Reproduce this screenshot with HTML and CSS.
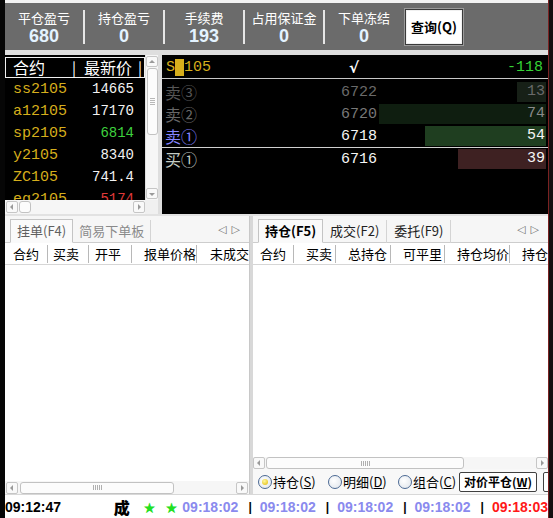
FILE: index.html
```html
<!DOCTYPE html>
<html lang="zh-CN">
<head>
<meta charset="utf-8">
<title>交易终端</title>
<link rel="stylesheet" href="styles.css">
</head>
<body>
<div class="app">
  <div class="edge-l"></div>
  <div class="main">
    <div class="topstrip"></div>
    <div class="stats">
      <div class="stat"><span class="lbl">平仓盈亏</span><span class="val">680</span></div>
      <div class="sep"></div>
      <div class="stat"><span class="lbl">持仓盈亏</span><span class="val">0</span></div>
      <div class="sep"></div>
      <div class="stat"><span class="lbl">手续费</span><span class="val">193</span></div>
      <div class="sep"></div>
      <div class="stat"><span class="lbl">占用保证金</span><span class="val">0</span></div>
      <div class="sep"></div>
      <div class="stat"><span class="lbl">下单冻结</span><span class="val">0</span></div>
      <button class="query">查询(Q)</button>
    </div>
    <div class="gap5"></div>

    <div class="upper">
      <div class="quotes">
        <div class="qlist">
          <div class="qhead"><span class="qh-name">合约</span><span class="qh-bar">|</span><span class="qh-price">最新价</span><span class="qh-bar">|</span></div>
          <div class="qrow"><span class="qn">ss2105</span><span class="qp">14665</span></div>
          <div class="qrow"><span class="qn">a12105</span><span class="qp">17170</span></div>
          <div class="qrow"><span class="qn">sp2105</span><span class="qp up">6814</span></div>
          <div class="qrow"><span class="qn">y2105</span><span class="qp">8340</span></div>
          <div class="qrow"><span class="qn">ZC105</span><span class="qp">741.4</span></div>
          <div class="qrow"><span class="qn">eg2105</span><span class="qp down">5174</span></div>
        </div>
        <div class="sb-v">
          <div class="arr arr-up"></div>
          <div class="thumb-v"><i class="grip-h"></i></div>
          <div class="sb-fill"></div>
          <div class="arr arr-down"></div>
        </div>
        <div class="sb-h">
          <div class="arr arr-left"></div>
          <div class="thumb-h thumb-q"></div>
          <div class="sb-fill"></div>
          <div class="arr arr-right"></div>
        </div>
        <div class="corner"></div>
      </div>

      <div class="book">
        <div class="bhead">
          <span class="bsym">S<span class="blk">M</span>105</span>
          <span class="bcheck">√</span>
          <span class="bchg">-118</span>
        </div>
        <div class="brow">
          <span class="blbl a3">卖③</span><span class="bpx a3p">6722</span>
          <div class="bvol"><div class="bar bar-a3" style="width:29px"><span class="a3p">13</span></div></div>
        </div>
        <div class="brow">
          <span class="blbl a2">卖②</span><span class="bpx a2p">6720</span>
          <div class="bvol"><div class="bar bar-a2" style="width:167px"><span class="a2v">74</span></div></div>
        </div>
        <div class="brow">
          <span class="blbl a1">卖①</span><span class="bpx wp">6718</span>
          <div class="bvol"><div class="bar bar-a1" style="width:121px"><span class="wp">54</span></div></div>
        </div>
        <div class="bline"></div>
        <div class="brow">
          <span class="blbl b1">买①</span><span class="bpx wp">6716</span>
          <div class="bvol"><div class="bar bar-b1" style="width:88px"><span class="wp">39</span></div></div>
        </div>
      </div>
    </div>

    <div class="lower">
      <div class="panel panel-l">
        <div class="tabs">
          <div class="tab sel dim">挂单(F4)</div>
          <div class="tab dim2">简易下单板</div>
          <div class="tabarrows"><span>◁</span><span>▷</span></div>
        </div>
        <div class="cols">
          <span class="col" style="width:43px;padding-left:8px">合约</span>
          <span class="col" style="width:41px;padding-left:5px">买卖</span>
          <span class="col" style="width:43px;padding-left:6px">开平</span>
          <span class="col" style="width:65px;padding-left:12px">报单价格</span>
          <span class="col last" style="width:60px;padding-left:13px">未成交数</span>
        </div>
        <div class="body"></div>
        <div class="sb-h sb-hl">
          <div class="arr arr-left"></div>
          <div class="thumb-h thumb-l"><i class="grip-v"></i></div>
          <div class="sb-fill"></div>
          <div class="arr arr-right"></div>
        </div>
      </div>
      <div class="divider"></div>
      <div class="panel panel-r">
        <div class="tabs">
          <div class="tab sel bold">持仓(F5)</div>
          <div class="tab plain">成交(F2)</div>
          <div class="tab plain">委托(F9)</div>
          <div class="tabarrows"><span>◁</span><span>▷</span></div>
        </div>
        <div class="cols">
          <span class="col" style="width:41px;padding-left:7px">合约</span>
          <span class="col" style="width:42px;padding-left:12px">买卖</span>
          <span class="col" style="width:55px;padding-left:12px">总持仓</span>
          <span class="col" style="width:54px;padding-left:12px">可平里</span>
          <span class="col" style="width:65px;padding-left:12px">持仓均价</span>
          <span class="col last" style="width:50px;padding-left:12px">持仓盈亏</span>
        </div>
        <div class="body"></div>
        <div class="sb-h sb-hr">
          <div class="arr arr-left"></div>
          <div class="thumb-h thumb-r"><i class="grip-v"></i></div>
          <div class="sb-fill"></div>
          <div class="arr arr-right"></div>
        </div>
        <div class="radios">
          <label class="radio"><span class="dot on"></span>持仓(<u>S</u>)</label>
          <label class="radio"><span class="dot"></span>明细(<u>D</u>)</label>
          <label class="radio"><span class="dot"></span>组合(<u>C</u>)</label>
          <button class="btn">对价平仓(<u>W</u>)</button>
          <button class="btn btn2">市价</button>
        </div>
      </div>
    </div>

    <div class="status">
      <span class="t-now">09:12:47</span>
      <span class="t-cheng">成</span>
      <span class="star">★</span>
      <span class="star">★</span>
      <span class="t">09:18:02</span><span class="pipe">|</span>
      <span class="t">09:18:02</span><span class="pipe">|</span>
      <span class="t">09:18:02</span><span class="pipe">|</span>
      <span class="t">09:18:02</span><span class="pipe">|</span>
      <span class="t red">09:18:03</span>
    </div>
  </div>
  <div class="edge-r"></div>
</div>
</body>
</html>
```
FILE: styles.css
```css
* { box-sizing: border-box; margin: 0; padding: 0; }
html, body { width: 553px; height: 518px; overflow: hidden; }
body {
  font-family: "Noto Sans CJK SC", "Liberation Sans", sans-serif;
  font-size: 13px;
  background: #e4e4e4;
  color: #000;
}
.app { display: flex; height: 518px; }
.edge-l { width: 5px; background: #060606; }
.edge-r { width: 5px; background: #141010; border-left: 1px solid #7a2222; }
.main { width: 543px; display: flex; flex-direction: column; }

/* top stats */
.topstrip { height: 3px; background: #f2f2f2; }
.stats {
  height: 47px; background: #6b6b6b;
  display: flex; align-items: center;
}
.stat {
  width: 78px; display: flex; flex-direction: column; align-items: center;
  padding-top: 2px;
}
.lbl { color: #fff; font-size: 13px; line-height: 17px; }
.val {
  color: #e4f3ff; font-family: "Liberation Sans", sans-serif; font-weight: bold;
  font-size: 18px; line-height: 21px;
}
.sep { width: 2px; height: 34px; background: #e6e6e6; }
.query {
  margin-left: 2px; width: 58px; height: 36px;
  background: #fff; border: 1px solid #3a3a3a;
  box-shadow: 0 0 0 1px #9a9a9a, inset 0 0 0 1px #f0f0f0;
  font-family: "Noto Sans CJK SC", sans-serif; font-weight: bold; font-size: 13px;
  color: #000;
}
.gap5 { height: 5px; background: #dedede; }

/* upper */
.upper { height: 159px; display: flex; background: #dedede; }
.quotes {
  width: 153px; display: grid;
  grid-template-columns: 140px 13px; grid-template-rows: 145px 14px;
}
.qlist {
  background: #000; padding-top: 2px; overflow: hidden;
  font-family: "Liberation Mono", monospace;
}
.qhead {
  height: 21px; border: 1px solid #f0f0f0; display: flex; align-items: center;
  color: #fff; font-family: "Noto Sans CJK SC", sans-serif; font-size: 16px; line-height: 19px;
  padding-left: 7px;
}
.qh-name { width: 59px; }
.qh-bar { font-size: 15px; }
.qh-price { margin: 0 6px 0 8px; }
.qrow {
  height: 22px; display: flex; align-items: center; justify-content: space-between;
  padding: 0 11px 0 8px;
}
.qn { color: #d6ae1c; font-size: 15px; }
.qp { color: #f2f2f2; font-size: 14px; }
.qp.up { color: #3ed03e; }
.qp.down { color: #e03a3a; }

.sb-v {
  background: #f6f6f6; display: flex; flex-direction: column; padding: 1px 0;
  border-left: 1px solid #e0e0e0;
}
.sb-h { background: #f6f6f6; display: flex; align-items: center; padding: 0 0 0 1px; }
.sb-fill { flex: 1; }
.corner { background: #f0f0f0; }
.arr {
  width: 12px; height: 11px; border: 1px solid #c6c6c6; border-radius: 2px;
  background: #f9f9f9; position: relative; flex: none;
}
.arr::after { content: ""; position: absolute; left: 50%; top: 50%; width: 0; height: 0; }
.arr-up::after { margin: -2px 0 0 -3px; border-left: 3px solid transparent; border-right: 3px solid transparent; border-bottom: 3px solid #9a9a9a; }
.arr-down::after { margin: -1px 0 0 -3px; border-left: 3px solid transparent; border-right: 3px solid transparent; border-top: 3px solid #9a9a9a; }
.arr-left::after { margin: -3px 0 0 -2px; border-top: 3px solid transparent; border-bottom: 3px solid transparent; border-right: 3px solid #9a9a9a; }
.arr-right::after { margin: -3px 0 0 -1px; border-top: 3px solid transparent; border-bottom: 3px solid transparent; border-left: 3px solid #9a9a9a; }
.sb-h .arr { width: 12px; height: 12px; }
.thumb-v {
  margin-top: 1px; height: 67px; width: 11px; align-self: center;
  border: 1px solid #c2c2c2; border-radius: 3px; background: #fcfcfc;
  display: flex; align-items: center; justify-content: center;
}
.grip-h {
  display: block; width: 5px; height: 8px;
  background: repeating-linear-gradient(to bottom, #b8b8b8 0 1px, transparent 1px 2px);
}
.thumb-h {
  height: 12px; margin-left: 1px;
  border: 1px solid #c2c2c2; border-radius: 3px; background: #fcfcfc;
  display: flex; align-items: center; justify-content: center;
}
.grip-v {
  display: block; width: 9px; height: 5px;
  background: repeating-linear-gradient(to right, #b0b0b0 0 1px, transparent 1px 2px);
}
.thumb-q { width: 12px; }

/* order book */
.book {
  margin-left: 4px; width: 386px; background: #000; padding-top: 2px;
  font-family: "Liberation Mono", monospace; font-size: 15px;
}
.bhead {
  height: 22px; border-bottom: 1px solid #c8c8c8; margin-bottom: 2px;
  display: flex; align-items: center; padding: 0 5px 0 4px;
}
.bsym { width: 183px; color: #d6ae1c; font-size: 15px; }
.blk { background: #d6ae1c; color: #d6ae1c; }
.bcheck { color: #fff; font-size: 15px; font-style: italic; font-weight: bold; font-family: "DejaVu Sans", sans-serif; }
.bchg { flex: 1; text-align: right; color: #36d236; }
.brow { height: 22px; display: flex; align-items: center; padding: 0 2px 0 3px; }
.blbl { width: 172px; font-family: "Noto Sans CJK SC", sans-serif; font-size: 16px; }
.bpx { width: 40px; text-align: right; }
.bvol { width: 167px; margin-left: 2px; height: 20px; display: flex; justify-content: flex-end; }
.bar { height: 20px; text-align: right; padding-right: 1px; line-height: 20px; }
.bar-a3 { background: #172017; }
.bar-a2 { background: #0f1e10; }
.bar-a1 { background: #1f3e20; }
.bar-b1 { background: #3e2122; }
.a3 { color: #565656; }
.a2 { color: #676767; }
.a1 { color: #8686ff; }
.b1 { color: #c4ccc4; }
.a3p { color: #6a6a6a; }
.a2p { color: #787878; }
.a2v { color: #8a8a8a; }
.wp { color: #f6f6f6; }
.bline { height: 1px; background: #d0d0d0; }

/* lower */
.lower { height: 280px; display: flex; padding-top: 2px; background: #e2e2e2; }
.panel { display: flex; flex-direction: column; background: #fff; }
.panel-l { width: 244px; }
.divider { width: 4px; background: #d8d8d8; border-left: 1px solid #c8c8c8; }
.panel-r { width: 295px; }
.tabs {
  height: 27px; background: #f6f6f6; border-bottom: 1px solid #cdcdcd;
  display: flex; align-items: flex-end; padding-left: 5px;
}
.tab {
  height: 23px; line-height: 22px; padding: 0 6px; font-size: 13px;
  border-right: 1px solid #d4d4d4; margin-bottom: -1px;
}
.tab.sel {
  background: #fafafa; border: 1px solid #c4c4c4; border-bottom: 1px solid #fafafa;
  padding: 0 6px; height: 24px;
}
.dim { color: #606060; }
.dim2 { color: #8a8a8a; }
.bold { font-weight: bold; color: #000; padding: 0 6px; }
.plain { color: #202020; padding: 0 7px; }
.tabarrows {
  margin-left: auto; margin-right: 9px; align-self: center; color: #707070;
  font-size: 11px; display: flex; gap: 5px; font-family: "DejaVu Sans", sans-serif;
}
.cols {
  height: 22px; display: flex; align-items: center; border-bottom: 1px solid #d6d6d6;
  white-space: nowrap; overflow: hidden;
}
.col {
  flex: none; font-size: 13px; line-height: 18px; color: #000;
  border-right: 1px solid #b8b8b8;
}
.col.last { border-right: none; flex: 1; }
.body { flex: 1; background: #fff; }
.sb-hl { height: 13px; background: #f6f6f6; padding-right: 1px; }
.thumb-l { width: 154px; margin-left: 2px; }
.sb-hr { height: 12px; background: #f6f6f6; padding-left: 0; }
.thumb-r { width: 198px; margin-left: 1px; }
.radios {
  height: 25px; display: flex; align-items: center; padding-left: 5px; background: #f8f8f8;
  white-space: nowrap; overflow: hidden;
}
.radio { width: 70px; display: flex; align-items: center; font-size: 13px; color: #000; flex: none; }
.radio:nth-child(3) { width: 61px; }
.radio u { text-decoration: underline; }
.dot {
  width: 14px; height: 14px; border-radius: 50%; border: 1px solid #4c6a94; margin-right: 1px;
  background: radial-gradient(circle at 40% 40%, #ffffff, #dde3ea);
  position: relative; flex: none;
}
.dot.on::after {
  content: ""; position: absolute; left: 3px; top: 3px; width: 6px; height: 6px; border-radius: 50%;
  background: radial-gradient(circle at 40% 35%, #fff8a0, #e0b800);
}
.btn {
  flex: none; width: 78px; height: 20px; background: #fff; border: 1px solid #404040;
  border-radius: 2px; font-family: "Noto Sans CJK SC", sans-serif; font-weight: bold; font-size: 12px;
  color: #000; line-height: 16px;
}
.btn2 { margin-left: 6px; width: 40px; }

/* status */
.status {
  height: 24px; background: #fff; border-top: 1px solid #d8d8d8;
  display: flex; align-items: center; white-space: nowrap;
  font-family: "Liberation Sans", sans-serif; font-weight: bold; font-size: 14px;
}
.t-now { color: #000; width: 111px; }
.t-cheng { color: #000; font-family: "Noto Sans CJK SC", serif; font-size: 16px; font-weight: 900; width: 31px; }
.star { color: #22e022; font-size: 11px; width: 22px; text-align: left; }
.star + .star { width: 17px; }
.t { color: #8a8aee; }
.t.red { color: #ff1818; }
.pipe { color: #000; margin: 0 8px 0 10px; font-size: 12px; }
```
